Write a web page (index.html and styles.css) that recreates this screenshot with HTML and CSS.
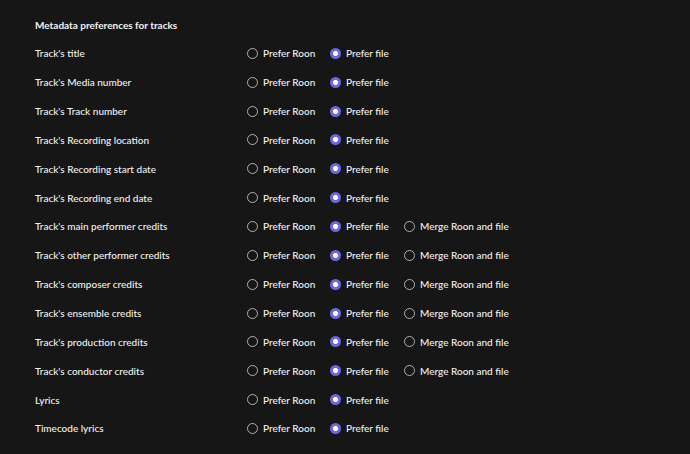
FILE: index.html
```html
<!DOCTYPE html>
<html>
<head>
<meta charset="utf-8">
<link rel="stylesheet" href="styles.css">
</head>
<body>
<div class="page">
  <div class="title">Metadata preferences for tracks</div>
  <div class="rows">
    <div class="row"><div class="label">Track's title</div><div class="opt"><span class="radio"></span>Prefer Roon</div><div class="opt"><span class="radio on"></span>Prefer file</div></div>
    <div class="row"><div class="label">Track's Media number</div><div class="opt"><span class="radio"></span>Prefer Roon</div><div class="opt"><span class="radio on"></span>Prefer file</div></div>
    <div class="row"><div class="label">Track's Track number</div><div class="opt"><span class="radio"></span>Prefer Roon</div><div class="opt"><span class="radio on"></span>Prefer file</div></div>
    <div class="row"><div class="label">Track's Recording location</div><div class="opt"><span class="radio"></span>Prefer Roon</div><div class="opt"><span class="radio on"></span>Prefer file</div></div>
    <div class="row"><div class="label">Track's Recording start date</div><div class="opt"><span class="radio"></span>Prefer Roon</div><div class="opt"><span class="radio on"></span>Prefer file</div></div>
    <div class="row"><div class="label">Track's Recording end date</div><div class="opt"><span class="radio"></span>Prefer Roon</div><div class="opt"><span class="radio on"></span>Prefer file</div></div>
    <div class="row"><div class="label">Track's main performer credits</div><div class="opt"><span class="radio"></span>Prefer Roon</div><div class="opt"><span class="radio on"></span>Prefer file</div><div class="opt"><span class="radio"></span>Merge Roon and file</div></div>
    <div class="row"><div class="label">Track's other performer credits</div><div class="opt"><span class="radio"></span>Prefer Roon</div><div class="opt"><span class="radio on"></span>Prefer file</div><div class="opt"><span class="radio"></span>Merge Roon and file</div></div>
    <div class="row"><div class="label">Track's composer credits</div><div class="opt"><span class="radio"></span>Prefer Roon</div><div class="opt"><span class="radio on"></span>Prefer file</div><div class="opt"><span class="radio"></span>Merge Roon and file</div></div>
    <div class="row"><div class="label">Track's ensemble credits</div><div class="opt"><span class="radio"></span>Prefer Roon</div><div class="opt"><span class="radio on"></span>Prefer file</div><div class="opt"><span class="radio"></span>Merge Roon and file</div></div>
    <div class="row"><div class="label">Track's production credits</div><div class="opt"><span class="radio"></span>Prefer Roon</div><div class="opt"><span class="radio on"></span>Prefer file</div><div class="opt"><span class="radio"></span>Merge Roon and file</div></div>
    <div class="row"><div class="label">Track's conductor credits</div><div class="opt"><span class="radio"></span>Prefer Roon</div><div class="opt"><span class="radio on"></span>Prefer file</div><div class="opt"><span class="radio"></span>Merge Roon and file</div></div>
    <div class="row"><div class="label">Lyrics</div><div class="opt"><span class="radio"></span>Prefer Roon</div><div class="opt"><span class="radio on"></span>Prefer file</div></div>
    <div class="row"><div class="label">Timecode lyrics</div><div class="opt"><span class="radio"></span>Prefer Roon</div><div class="opt"><span class="radio on"></span>Prefer file</div></div>
  </div>
</div>
</body>
</html>
```
FILE: styles.css
```css
html, body {
  margin: 0;
  padding: 0;
  background: #161616;
}
body {
  width: 690px;
  height: 454px;
  overflow: hidden;
  font-family: Lato, "Liberation Sans", sans-serif;
  color: #f2f2f2;
  font-size: 10px;
  font-weight: 500;
}
.page {
  padding: 18px 0 0 35px;
}
.title {
  font-weight: 700;
  height: 14px;
  line-height: 14px;
  margin-bottom: 7px;
}
.rows {
  display: flex;
  flex-direction: column;
}
.row {
  display: flex;
  align-items: center;
  height: 28.85px;
}
.label {
  width: 212px;
  flex: none;
}
.opt {
  display: flex;
  align-items: center;
  gap: 5px;
  flex: none;
}
.opt:nth-child(2) { width: 83px; }
.opt:nth-child(3) { width: 74px; }
.radio {
  width: 11px;
  height: 11px;
  box-sizing: border-box;
  border: 1.5px solid #b0b0b0;
  border-radius: 50%;
  flex: none;
}
.radio.on {
  border: none;
  background: radial-gradient(circle, #ffffff 0 2.2px, #6e66e3 2.8px);
}
```
